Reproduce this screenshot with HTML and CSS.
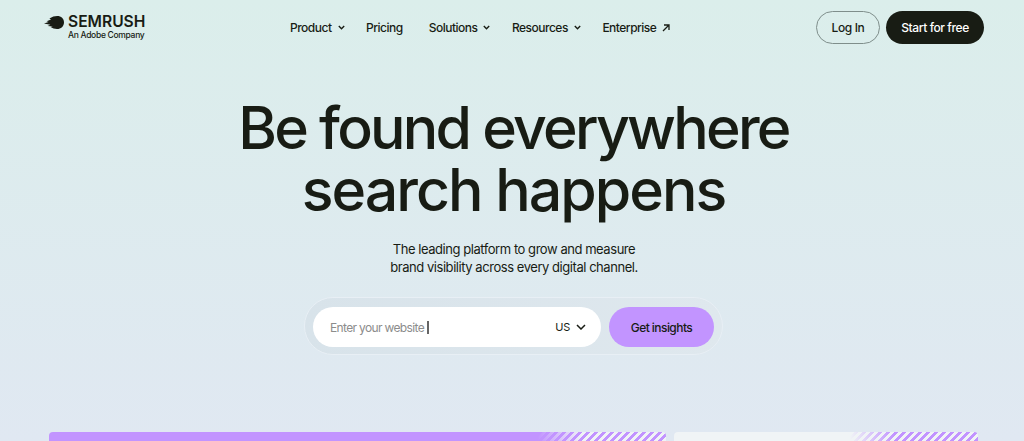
FILE: index.html
```html
<!DOCTYPE html>
<html lang="en">

<head>
    <meta charset="UTF-8">
    <meta name="viewport" content="width=device-width, initial-scale=1.0">
    <title>Semrush</title>
    <link rel="stylesheet" href="styles.css">
</head>

<body>

    <!-- Header -->
    <header class="site-header">
        <a class="logo" href="#">
            <svg class="logo-mark" width="20" height="13" viewBox="0 0 20 13">
                <path d="M0 7.4 L4.6 6 L2.6 5.2 L7 3.4 L5.4 2.6 C8 .8 10.6 0 13.2 0 C17.2 0 20 2.6 20 6.2 C20 10.2 17 13 13 13 C10.6 13 8.4 12.2 6.6 11 L8.8 10.4 L3.6 10 L6.4 8.8 Z" fill="#181c14"/>
            </svg>
            <span class="logo-text">
                <span class="logo-name">SEMRUSH</span>
                <span class="logo-sub">An Adobe Company</span>
            </span>
        </a>

        <nav class="main-nav">
            <a href="#">Product
                <svg class="chevron" width="7" height="5" viewBox="0 0 7 5"><path d="M.8 1 L3.5 3.7 L6.2 1" /></svg>
            </a>
            <a href="#">Pricing</a>
            <a href="#">Solutions
                <svg class="chevron" width="7" height="5" viewBox="0 0 7 5"><path d="M.8 1 L3.5 3.7 L6.2 1" /></svg>
            </a>
            <a href="#">Resources
                <svg class="chevron" width="7" height="5" viewBox="0 0 7 5"><path d="M.8 1 L3.5 3.7 L6.2 1" /></svg>
            </a>
            <a href="#">Enterprise
                <svg class="arrow" width="8" height="8" viewBox="0 0 8 8"><path d="M1 7 L7 1 M2 1 L7 1 L7 6" /></svg>
            </a>
        </nav>

        <div class="header-actions">
            <a class="btn btn-outline" href="#">Log In</a>
            <a class="btn btn-dark" href="#">Start for free</a>
        </div>
    </header>

    <!-- Hero -->
    <main class="hero">
        <h1>Be found everywhere<br><span class="h1-second">search happens</span></h1>
        <p class="lead">The leading platform to grow and measure<br>brand visibility across every digital channel.</p>

        <form class="search-box">
            <div class="search-input">
                <span class="placeholder">Enter your website</span>
                <span class="caret"></span>
                <span class="country">US</span>
                <svg class="country-chevron" width="10" height="6" viewBox="0 0 10 6"><path d="M1 1 L5 5 L9 1" /></svg>
            </div>
            <button type="button" class="btn-insights">Get insights</button>
        </form>
    </main>

    <!-- Cards peeking from the fold -->
    <section class="cards">
        <div class="card card-purple"></div>
        <div class="card card-light"></div>
    </section>

</body>

</html>
```

FILE: styles.css
```css
html, body {
    height: 441px;
    overflow: hidden;
}

body {
    margin: 0;
    background: linear-gradient(180deg, #dbeeeb 0%, #e0e8f2 100%);
    color: #181c14;
    font-family: Inter, "Liberation Sans", sans-serif;
}

a {
    color: inherit;
    text-decoration: none;
}

.site-header {
    display: flex;
    align-items: center;
    height: 55px;
    padding: 0 40px 0 44px;
}

.logo {
    display: flex;
    gap: 4px;
    width: 246px;
    align-items: flex-start;
}

.logo-mark {
    margin-top: 2px;
}

.logo-text {
    display: flex;
    flex-direction: column;
}

.logo-name {
    font-size: 15.6px;
    font-weight: 600;
    line-height: 15px;
}

.logo-sub {
    font-size: 8.5px;
    font-weight: 500;
    line-height: 13px;
    letter-spacing: -.3px;
}

.main-nav {
    display: flex;
    gap: 26px;
    font-size: 12px;
    font-weight: 500;
    letter-spacing: -.5px;
}

.main-nav a {
    display: flex;
    align-items: center;
    gap: 6px;
}

.chevron, .arrow, .country-chevron {
    fill: none;
    stroke: #181c14;
}

.chevron {
    stroke-width: 1.4;
    margin-right: -4.5px;
}

.arrow {
    stroke-width: 1.3;
}

.header-actions {
    display: flex;
    gap: 6px;
    margin-left: auto;
}

.btn {
    display: flex;
    align-items: center;
    justify-content: center;
    height: 33px;
    box-sizing: border-box;
    border-radius: 17px;
    font-size: 12px;
    font-weight: 500;
    letter-spacing: -.4px;
}

.btn-outline {
    width: 64px;
    border: 1px solid #7f8e8b;
}

.btn-dark {
    width: 98px;
    background-color: #181c14;
    color: #fff;
}

.hero {
    display: flex;
    flex-direction: column;
    align-items: center;
    text-align: center;
}

h1 {
    margin: 42px 0 0 3px;
    font-size: 59px;
    font-weight: 550;
    line-height: 62px;
    letter-spacing: -2.75px;
}

.h1-second {
    letter-spacing: -2px;
}

.lead {
    margin: 19px 0 0 4px;
    font-size: 13px;
    line-height: 18px;
    letter-spacing: -.45px;
}

.search-box {
    display: flex;
    gap: 8px;
    box-sizing: border-box;
    width: 419px;
    height: 58px;
    margin: 21px 0 0 3px;
    padding: 9px 8px 7px;
    border: 1px solid #e8eff5;
    border-radius: 29px;
    background: linear-gradient(90deg, #d8e3ea, #dfe8ee);
}

.search-input {
    display: flex;
    align-items: center;
    flex: 1;
    padding: 0 15px 0 17px;
    border-radius: 21px;
    background-color: #fff;
    font-size: 12px;
    letter-spacing: -.65px;
}

.placeholder {
    color: #8c8c8c;
}

.caret {
    width: 1.5px;
    height: 13px;
    margin-left: 3px;
    background-color: #666;
}

.country {
    margin-left: auto;
    font-size: 11px;
    letter-spacing: -.3px;
}

.country-chevron {
    margin-left: 6px;
    stroke-width: 1.5;
}

.btn-insights {
    width: 105px;
    border: none;
    border-radius: 21px;
    background-color: #c294ff;
    color: #181c14;
    font-family: inherit;
    font-size: 12px;
    font-weight: 500;
    letter-spacing: -.55px;
}

.cards {
    display: flex;
    gap: 8px;
    margin: 77px 46px 0 49px;
}

.card {
    height: 20px;
    border-radius: 4px 4px 0 0;
}

/* the fade sits over the stripes, both pinned to the right end */
.card-purple {
    flex: 1;
    background-color: #c294ff;
    background-image:
        linear-gradient(90deg, #c294ff, rgba(194, 148, 255, 0) 35%),
        repeating-linear-gradient(135deg, transparent 0 3px, #f0f4f6 3px 5.66px);
    background-size: 128px 20px;
    background-position: right top;
    background-repeat: no-repeat;
}

.card-light {
    width: 304px;
    background-color: #f0f4f6;
    background-image:
        linear-gradient(90deg, #f0f4f6, rgba(240, 244, 246, 0) 35%),
        repeating-linear-gradient(135deg, transparent 0 3px, #c294ff 3px 5.66px);
    background-size: 128px 20px;
    background-position: right top;
    background-repeat: no-repeat;
}
```
